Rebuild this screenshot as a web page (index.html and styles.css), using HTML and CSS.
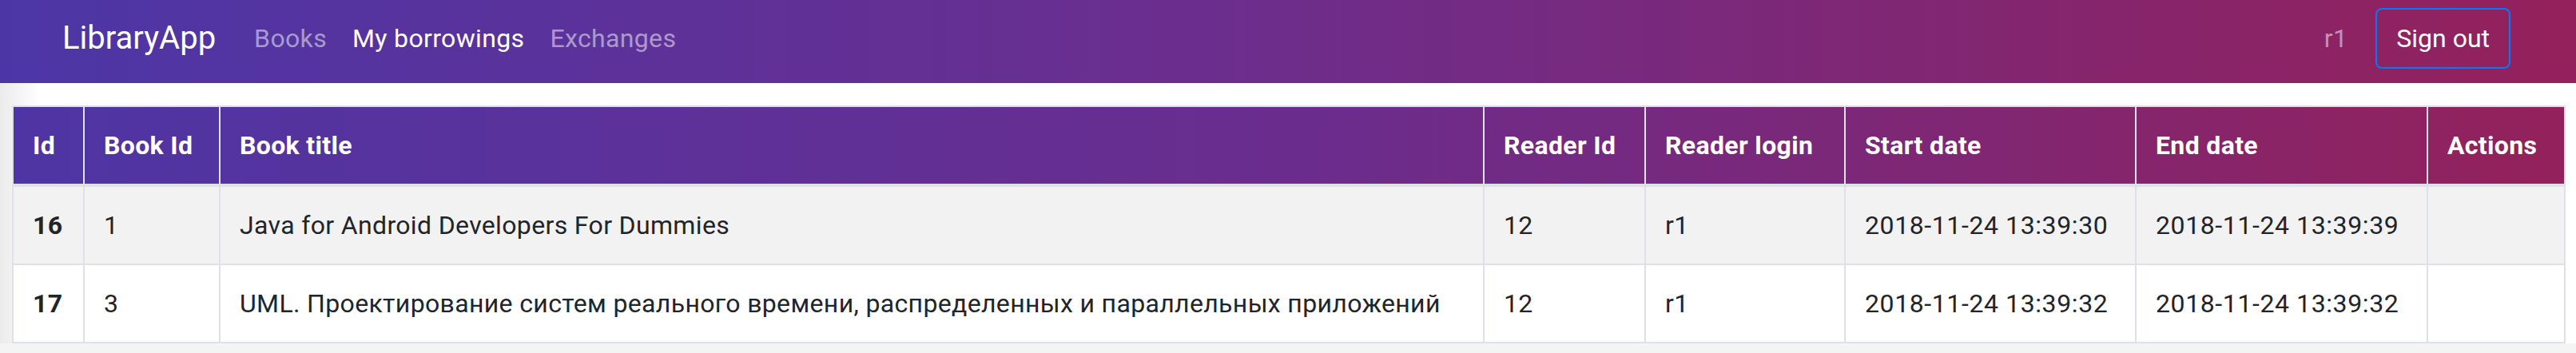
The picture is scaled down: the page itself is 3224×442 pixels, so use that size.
FILE: index.html
```html
<!DOCTYPE html>
<html lang="en">
<head>
<meta charset="utf-8">
<title>LibraryApp</title>
<link rel="stylesheet" href="styles.css">
</head>
<body>
<nav class="navbar">
  <a class="brand" href="#">LibraryApp</a>
  <ul class="nav">
    <li><a class="nav-link" href="#">Books</a></li>
    <li><a class="nav-link active" href="#">My borrowings</a></li>
    <li><a class="nav-link" href="#">Exchanges</a></li>
  </ul>
  <div class="nav-right">
    <span class="user">r1</span>
    <button class="btn-signout" type="button">Sign out</button>
  </div>
</nav>
<main class="content">
  <table class="table">
    <colgroup>
      <col class="c-id">
      <col class="c-book">
      <col class="c-title">
      <col class="c-reader">
      <col class="c-login">
      <col class="c-date">
      <col class="c-date2">
      <col class="c-actions">
    </colgroup>
    <thead>
      <tr>
        <th>Id</th>
        <th>Book Id</th>
        <th>Book title</th>
        <th>Reader Id</th>
        <th>Reader login</th>
        <th>Start date</th>
        <th>End date</th>
        <th>Actions</th>
      </tr>
    </thead>
    <tbody>
      <tr>
        <th>16</th>
        <td>1</td>
        <td>Java for Android Developers For Dummies</td>
        <td>12</td>
        <td>r1</td>
        <td class="date">2018-11-24 13:39:30</td>
        <td class="date">2018-11-24 13:39:39</td>
        <td></td>
      </tr>
      <tr>
        <th>17</th>
        <td>3</td>
        <td>UML. Проектирование систем реального времени, распределенных и параллельных приложений</td>
        <td>12</td>
        <td>r1</td>
        <td class="date">2018-11-24 13:39:32</td>
        <td class="date">2018-11-24 13:39:32</td>
        <td></td>
      </tr>
    </tbody>
  </table>
</main>
</body>
</html>
```
FILE: styles.css
```css
html, body {
  height: 100%;
}
body {
  margin: 0;
  font-family: Roboto, "Noto Sans", sans-serif;
  font-size: 32px;
  line-height: 1.5;
  letter-spacing: 0.35px;
  color: #212529;
  background: #f4f4f4;
}

.navbar {
  display: flex;
  align-items: center;
  height: 104px;
  box-sizing: border-box;
  padding: 0 82px 8px 78px;
  background: linear-gradient(to right, #4c36a6 0%, #6a2e8f 45%, #94215b 100%);
}
.brand {
  font-size: 40px;
  line-height: 60px;
  letter-spacing: 0;
  color: #fff;
  text-decoration: none;
  margin-right: 32px;
}
.nav {
  display: flex;
  list-style: none;
  margin: 0;
  padding: 0;
}
.nav-link {
  display: block;
  padding: 0 16px;
  color: rgba(255, 255, 255, 0.5);
  text-decoration: none;
}
.nav-link.active {
  color: #fff;
}
.nav-right {
  margin-left: auto;
  display: flex;
  align-items: center;
}
.user {
  color: rgba(255, 255, 255, 0.5);
  margin-right: 35px;
}
.btn-signout {
  font: inherit;
  line-height: 48px;
  color: #fff;
  background: transparent;
  border: 2px solid #007bff;
  border-radius: 8px;
  padding: 12px 24px;
}

.content {
  padding: 28px 16px 0 15px;
  background: linear-gradient(to right, #ebebeb 0, #fff 50px);
}
.table {
  width: 100%;
  border-collapse: collapse;
  table-layout: fixed;
}
.c-id { width: 89px; }
.c-book { width: 170px; }
.c-title { width: 1582px; }
.c-reader { width: 202px; }
.c-login { width: 250px; }
.c-date { width: 364px; }
.c-date2 { width: 365px; }
.c-actions { width: 172px; }

.table th,
.table td {
  padding: 24px;
  border: 2px solid #dee2e6;
  text-align: left;
  vertical-align: top;
  white-space: nowrap;
}
.table td.date {
  letter-spacing: 0.6px;
}
.table thead tr {
  background: linear-gradient(to right, #4e35a4 0%, #6a2d8e 50%, #93215b 100%);
}
.table thead th {
  color: #fff;
  font-weight: 700;
  border-bottom-width: 4px;
}
.table tbody th {
  font-weight: 700;
}
.table tbody tr:nth-child(odd) {
  background: #f2f2f2;
}
.table tbody tr:nth-child(even) {
  background: #fff;
}
```
